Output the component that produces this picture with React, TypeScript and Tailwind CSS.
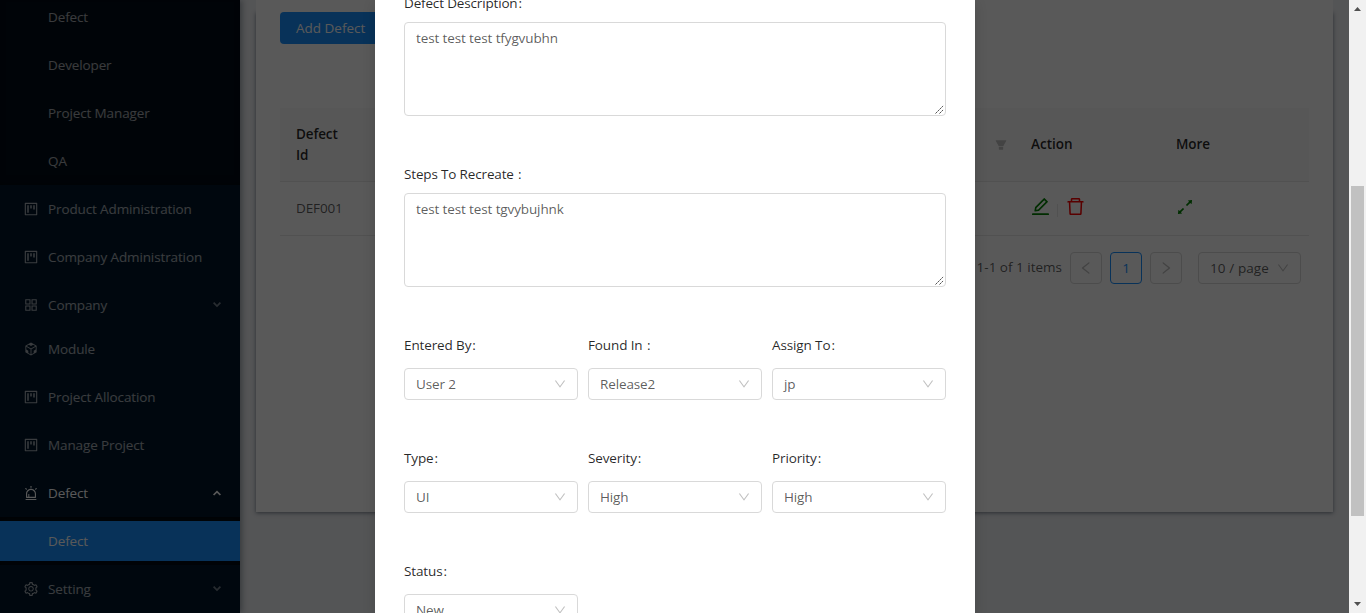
import React from "react";
import {
  AiOutlineProject,
  AiOutlineAppstore,
  AiOutlineCodeSandbox,
  AiOutlineAlert,
  AiOutlineSetting,
  AiOutlineEdit,
  AiOutlineDelete,
  AiOutlineArrowsAlt,
  AiFillFilter,
  AiOutlineDown,
  AiOutlineLeft,
  AiOutlineRight,
} from "react-icons/ai";
import type { IconType } from "react-icons";

// Ant Design crops its glyphs to this box.
const ICON_BOX = "64 64 896 896";

function Chevron({ up = false }: { up?: boolean }) {
  return (
    <svg
      width="10"
      height="10"
      viewBox="0 0 10 10"
      className={up ? "mr-[18px]" : "mr-[18px] opacity-70"}
      fill="none"
      stroke="currentColor"
      strokeWidth="1.7"
    >
      <path d={up ? "M1.6 7 L5 3.6 L8.4 7" : "M1.6 2.6 L5 6 L8.4 2.6"} />
    </svg>
  );
}

function NavItem({
  label,
  icon: Icon,
  arrow,
  active = false,
  spacing = "mb-2",
}: {
  label: string;
  icon?: IconType;
  arrow?: "up" | "down";
  active?: boolean;
  spacing?: string;
}) {
  return (
    <div className={`flex h-10 shrink-0 items-center pl-6 ${spacing} ${active ? "text-white" : "text-white/65"}`}>
      {Icon && <Icon viewBox={ICON_BOX} className="mr-[10px] size-[14px]" />}
      <span className={`flex-1 ${Icon ? "" : "pl-6"}`}>{label}</span>
      {arrow && <Chevron up={arrow === "up"} />}
    </div>
  );
}

function Sidebar() {
  return (
    <aside className="relative z-10 flex h-full w-60 shrink-0 flex-col bg-[#001529] shadow-[2px_0_6px_rgba(0,21,41,0.35)]">
      <div className="h-[185px] shrink-0 bg-[#000c17] shadow-[inset_0_-4px_8px_-4px_rgba(0,0,0,0.45)]">
        <div className="-mt-[3px]">
          <NavItem label="Defect" />
          <NavItem label="Developer" />
          <NavItem label="Project Manager" />
          <NavItem label="QA" />
        </div>
      </div>
      <div className="flex flex-col pt-1">
        <NavItem label="Product Administration" icon={AiOutlineProject} />
        <NavItem label="Company Administration" icon={AiOutlineProject} />
        <NavItem label="Company" icon={AiOutlineAppstore} arrow="down" spacing="mb-1" />
        <NavItem label="Module" icon={AiOutlineCodeSandbox} />
        <NavItem label="Project Allocation" icon={AiOutlineProject} />
        <NavItem label="Manage Project" icon={AiOutlineProject} />
        <NavItem label="Defect" icon={AiOutlineAlert} arrow="up" active spacing="mb-1" />
      </div>
      <div className="bg-[#000c17] py-1 shadow-[inset_0_2px_8px_rgba(0,0,0,0.45)]">
        <div className="bg-[#1890ff]">
          <NavItem label="Defect" active spacing="mb-0" />
        </div>
      </div>
      <div className="pt-1">
        <NavItem label="Setting" icon={AiOutlineSetting} arrow="down" spacing="mb-0" />
      </div>
    </aside>
  );
}

function DefectTable() {
  return (
    <div className="mt-[64px]">
      <div className="flex h-[74px] items-center border-b border-[#e8e8e8] bg-[#fafafa] font-semibold text-black/85">
        <div className="flex-1 pl-4 leading-[21px]">
          Defect
          <br />
          Id
        </div>
        <AiFillFilter viewBox={ICON_BOX} className="mr-6 size-3 text-[#bfbfbf]" />
        <div className="w-[145px] tracking-normal">Action</div>
        <div className="w-[133px]">More</div>
      </div>
      <div className="flex h-[54px] items-center border-b border-[#e8e8e8]">
        <div className="flex-1 pl-4">DEF001</div>
        <div className="flex w-[145px] items-center">
          <AiOutlineEdit viewBox={ICON_BOX} className="mb-1 size-[19px] text-[green]" />
          <span className="mt-1 mr-2 ml-[7px] h-[13px] w-px bg-[#e8e8e8]" />
          <AiOutlineDelete viewBox={ICON_BOX} className="mb-1 size-[19px] text-[red]" />
        </div>
        <div className="w-[133px]">
          <AiOutlineArrowsAlt viewBox={ICON_BOX} className="mb-1 size-[18px] text-[green]" />
        </div>
      </div>
    </div>
  );
}

function Pagination() {
  return (
    <div className="mt-4 flex items-center justify-end pr-2">
      <span className="mr-2 pb-[2px] tracking-normal">1-1 of 1 items</span>
      <span className="mr-2 flex size-8 items-center justify-center rounded border border-[#d9d9d9] text-black/25">
        <AiOutlineLeft viewBox={ICON_BOX} className="size-[14px]" />
      </span>
      <span className="mr-2 flex size-8 items-center justify-center rounded border border-[#1890ff] text-[#1890ff]">1</span>
      <span className="mr-4 flex size-8 items-center justify-center rounded border border-[#d9d9d9] text-black/25">
        <AiOutlineRight viewBox={ICON_BOX} className="size-[14px]" />
      </span>
      <span className="flex h-8 w-[103px] items-center justify-between rounded border border-[#d9d9d9] px-[11px] tracking-[0.1px] whitespace-nowrap">
        10 / page
        <AiOutlineDown viewBox={ICON_BOX} className="size-3 text-black/25" />
      </span>
    </div>
  );
}

function Label({ text }: { text: string }) {
  return (
    <>
      {text}
      <span className="ml-px">:</span>
    </>
  );
}

function Field({ label, value }: { label: string; value: string }) {
  return (
    <div className="h-[113px]">
      <div className="h-[39px] pt-[6px] leading-[21px] whitespace-pre text-black/85">
        <Label text={label} />
      </div>
      <div className="flex h-8 items-center justify-between rounded border border-[#d9d9d9] px-[11px]">
        {value}
        <AiOutlineDown viewBox={ICON_BOX} className="size-3 text-black/25" />
      </div>
    </div>
  );
}

function Area({ label, value }: { label: string; value: string }) {
  return (
    <div className="h-[171px]">
      <div className="h-[29px] leading-[21px] tracking-[-0.16px] whitespace-pre text-black/85">
        <Label text={label} />
      </div>
      <div className="relative h-[94px] rounded border border-[#d9d9d9] px-[11px] py-[5px] leading-[21px]">
        {value}
        <svg className="absolute right-0 bottom-0" width="11" height="11" viewBox="0 0 11 11" stroke="#444" strokeWidth="1">
          <path d="M1.5 9.5 L9.5 1.5 M5.5 9.5 L9.5 5.5" fill="none" strokeDasharray="2 0.8" />
        </svg>
      </div>
    </div>
  );
}

function Modal() {
  return (
    <section className="absolute top-0 left-[375px] h-[613px] w-[600px] bg-white shadow-[0_4px_12px_rgba(0,0,0,0.15)]">
      <div className="h-[613px] overflow-hidden px-[29px]">
        <div className="-mt-[7px]">
          <Area label="Defect Description" value="test test test tfygvubhn" />
          <Area label="Steps To Recreate " value="test test test tgvybujhnk" />
        </div>
        <div className="-mt-[6px] grid grid-cols-3 gap-x-[10px]">
          <Field label="Entered By" value="User 2" />
          <Field label="Found In " value="Release2" />
          <Field label="Assign To" value="jp" />
          <Field label="Type" value="UI" />
          <Field label="Severity" value="High" />
          <Field label="Priority" value="High" />
          <Field label="Status" value="New" />
        </div>
      </div>
    </section>
  );
}

function Scrollbar() {
  return (
    <div className="flex h-full w-[17px] shrink-0 flex-col items-center bg-[#f1f1f1]">
      <svg width="17" height="17" viewBox="0 0 17 17" fill="#505050">
        <path d="M5 11 L8.5 7 L12 11 Z" />
      </svg>
      <div className="mt-[169px] h-[330px] w-[13px] bg-[#c1c1c1]" />
      <div className="flex-1" />
      <svg width="17" height="17" viewBox="0 0 17 17" fill="#505050">
        <path d="M5 6 L8.5 10 L12 6 Z" />
      </svg>
    </div>
  );
}

export default function App() {
  return (
    <div className="flex h-[613px] w-[1366px] overflow-hidden font-['Open_Sans','Noto_Sans',sans-serif] text-[13.5px] tracking-[-0.12px] text-black/65">
      <div className="relative flex h-full min-w-0 flex-1 overflow-hidden bg-[#f0f2f5]">
        <Sidebar />
        <main className="min-w-0 flex-1 pr-4 pl-4">
          <div className="relative z-1 h-3 bg-white" />
          <div className="h-[500px] bg-white px-6 shadow-[0_1px_4px_rgba(0,21,41,0.5)]">
            <button className="block h-8 w-[110px] rounded bg-[#1890ff] px-4 text-left tracking-normal whitespace-nowrap text-white">
              Add Defect
            </button>
            <DefectTable />
            <Pagination />
          </div>
        </main>
        <div className="absolute inset-0 z-20 bg-black/65">
          <Modal />
        </div>
      </div>
      <Scrollbar />
    </div>
  );
}
